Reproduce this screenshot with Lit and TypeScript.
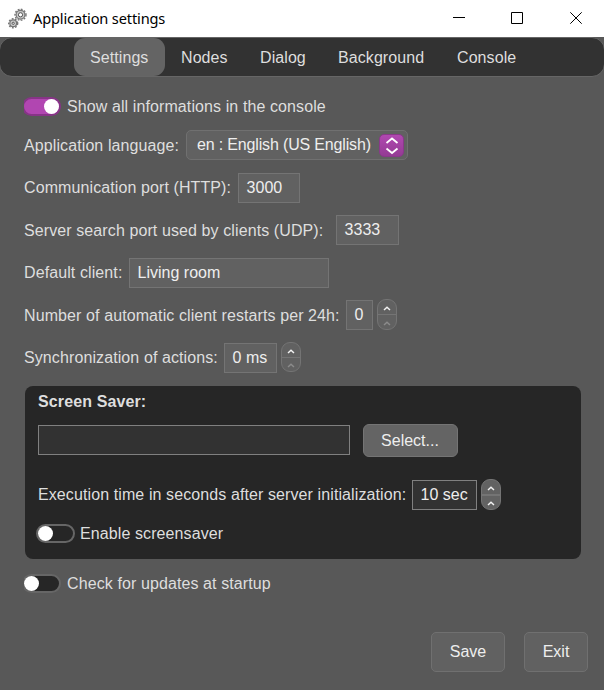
import { LitElement, html, css, svg, nothing } from "lit";
import { customElement, property } from "lit/decorators.js";
import { classMap } from "lit/directives/class-map.js";
import { styleMap } from "lit/directives/style-map.js";

const px = (n: number) => `${n}px`;

@customElement("toggle-switch")
class ToggleSwitch extends LitElement {
  @property({ type: Boolean }) on = false;
  @property({ type: Boolean }) clipped = false;

  static styles = css`
    :host { display: block; flex: none; }
    .frame { overflow: hidden; display: flex; justify-content: flex-end; width: 39px; height: 19px; }
    .clipped { width: 37px; }
    .track {
      box-sizing: border-box; flex: none; width: 39px; height: 19px;
      border: 2px solid #666; border-radius: 10px; background: #262626; display: flex;
    }
    .on { background: #b146b1; border-color: #873487; justify-content: flex-end; }
    .knob { width: 15px; height: 15px; border-radius: 50%; background: #fff; }
  `;

  render() {
    return html`<div class=${classMap({ frame: true, clipped: this.clipped })}>
      <div class=${classMap({ track: true, on: this.on })}><div class="knob"></div></div>
    </div>`;
  }
}

@customElement("step-buttons")
class StepButtons extends LitElement {
  @property() kind = "normal";

  static styles = css`
    :host { display: block; flex: none; width: 20px; height: 31px; margin: -1px 0 0 4px; }
    .box {
      box-sizing: border-box; width: 20px; height: 31px; border: 1px solid #747474;
      border-radius: 9px; background: #616161; display: flex; flex-direction: column;
    }
    .short { height: 30px; }
    .half { flex: 1; display: flex; align-items: center; justify-content: center; }
    .half + .half { border-top: 1px solid #747474; }
    .dark { background: #626262; }
    .dark .half + .half { border-top-width: 2px; }
    svg { display: block; margin-top: 3px; }
    path { fill: none; stroke: #f2f2f2; stroke-width: 1.5; }
    .off path { stroke: #8b8b8b; }
  `;

  render() {
    const arrow = html`<svg width="8" height="5" viewBox="0 0 8 5"><path d="M1 4 4 1.3 7 4" /></svg>`;
    const dark = this.kind === "dark";
    return html`<div class=${classMap({ box: true, dark, short: this.kind === "short" })}>
      <div class="half">${arrow}</div>
      <div class=${classMap({ half: true, off: !dark })}>${arrow}</div>
    </div>`;
  }
}

interface Field {
  label: string;
  value: string;
  labelWidth: number;
  width: number;
  gap: number;
  drop: number;
  step?: string;
}

const FIELDS: Field[] = [
  { label: "Communication port (HTTP):", value: "3000", labelWidth: 214, width: 62, gap: 13, drop: 0 },
  { label: "Server search port used by clients (UDP):", value: "3333", labelWidth: 312, width: 63, gap: 12, drop: 1 },
  { label: "Default client:", value: "Living room", labelWidth: 105, width: 200, gap: 13, drop: 0 },
  { label: "Number of automatic client restarts per 24h:", value: "0", labelWidth: 322, width: 27, gap: 12, drop: 1, step: "normal" },
  { label: "Synchronization of actions:", value: "0 ms", labelWidth: 200, width: 53, gap: 13, drop: 0, step: "short" },
];

const TABS: [string, number][] = [
  ["Settings", 91], ["Nodes", 79], ["Dialog", 78], ["Background", 119], ["Console", 91],
];

const gear = (cx: number, cy: number, r: number) => svg`
  <circle class="teeth" cx=${cx} cy=${cy} r=${r + 1.1} />
  <circle class="wheel" cx=${cx} cy=${cy} r=${r} />
  <circle class="hub" cx=${cx} cy=${cy} r=${r - 2.3} />`;

@customElement("app-root")
class AppRoot extends LitElement {
  static styles = css`
    :host {
      display: flex; flex-direction: column; width: 604px; height: 690px; overflow: hidden;
      background: #585858; color: #dedede; font: 16px/20px "Liberation Sans", Arial, sans-serif;
      white-space: nowrap;
    }
    * { box-sizing: border-box; }
    .titlebar {
      flex: none; height: 37px; background: #fff; color: #000; display: flex; align-items: center;
      padding-left: 8px; font: 14.6px/20px "Noto Sans", sans-serif;
    }
    .title { flex: 1; margin-left: 6px; margin-top: -1px; letter-spacing: -0.15px; }
    .gears .teeth { fill: none; stroke: #777; stroke-width: 1.4; stroke-dasharray: 1.8 1.4; }
    .gears .wheel { fill: #c9c9c9; stroke: #777; stroke-width: 1.2; }
    .gears .hub { fill: #fff; stroke: #555; stroke-width: 1; }
    .controls path { fill: none; stroke: #000; stroke-width: 1; }
    .tabs {
      flex: none; width: 606px; height: 40px; margin-left: -1px; background: #323232;
      border: 1px solid #666; border-radius: 13px; display: flex; padding-left: 74px;
    }
    .tab { flex: none; height: 38px; line-height: 40px; padding-left: 16px; letter-spacing: 0.08px; }
    .selected { background: #646464; border-radius: 11px; }
    .page { flex: 1; padding: 20px 23px 0 24px; display: flex; flex-direction: column; }
    .row { flex: none; display: flex; align-items: flex-start; }
    .label { flex: none; letter-spacing: 0.1px; }
    .field .label, .language .label, .delay .label { padding-top: 5px; }
    .console { height: 20px; }
    .console .label, .updates .label { margin-left: 6px; }
    .language { height: 30px; margin-top: 13px; }
    .language .label { width: 162px; padding-top: 6px; }
    .select {
      width: 222px; height: 30px; border: 1px solid #707070; border-radius: 5px; background: #616161;
      color: #eee; display: flex; align-items: center; justify-content: space-between;
      padding: 0 3px 0 10px; letter-spacing: -0.16px;
    }
    .chevrons {
      display: block; width: 25px; height: 23px; border-radius: 5px; border: 1px solid #8a398a;
      background: linear-gradient(#b148b1, #943b94);
    }
    .chevrons path { fill: none; stroke: #fff; stroke-width: 1.8; }
    .input {
      flex: none; height: 30px; line-height: 28px; border: 1px solid #747474; background: #616161;
      color: #eee; padding-left: 7.6px;
    }
    .saver {
      flex: none; width: 556px; height: 173px; margin: 13px 0 0 1px; background: #262626;
      border-radius: 8px; padding: 6px 13px 0; display: flex; flex-direction: column;
    }
    .heading { flex: none; height: 32px; font-weight: bold; letter-spacing: 0.12px; }
    .saver .input { background: #323232; border-color: #808080; }
    .saver .file { width: 312px; margin-top: 1px; }
    .button {
      border: 1px solid #747474; background: #646464; border-radius: 6px; color: #eee;
      display: flex; align-items: center; justify-content: center; width: 95px; height: 33px;
    }
    .browse { margin-left: 13px; padding-right: 1px; }
    .delay { height: 30px; margin-top: 23px; }
    .delay .label { width: 374px; }
    .delay .input { width: 65px; }
    .enable { height: 20px; margin: 14px 0 0 -2px; }
    .enable .label { margin-left: 5px; }
    .updates { height: 20px; margin-top: 15px; }
    .actions { display: flex; gap: 19px; justify-content: flex-end; margin: 38px -7px 0 0; }
    .actions .button { width: 74px; height: 40px; border-radius: 5px; background: #616161; border-color: #707070; }
    .actions .exit { width: 64px; }
  `;

  render() {
    return html`
      <div class="titlebar">
        <svg class="gears" width="19" height="22" viewBox="0 0 19 22">
          ${gear(12.5, 6.8, 4.4)} ${gear(5.2, 15.3, 3.4)}
        </svg>
        <div class="title">Application settings</div>
        <svg class="controls" width="151" height="37" viewBox="453 0 151 37">
          <path d="M453 17.5h12M511.500 12.500h11v11h-11zM570.300 12.300l11.400 11.400M581.700 12.300l-11.400 11.400" />
        </svg>
      </div>
      <div class="tabs">
        ${TABS.map(([name, width], i) => html`<div
          class=${classMap({ tab: true, selected: i === 0 })}
          style=${styleMap({ width: px(width) })}>${name}</div>`)}
      </div>
      <div class="page">
        <div class="row console">
          <toggle-switch on clipped></toggle-switch>
          <div class="label">Show all informations in the console</div>
        </div>
        <div class="row language">
          <div class="label">Application language:</div>
          <div class="select">
            <span>en : English (US English)</span>
            <svg class="chevrons" viewBox="0 0 23 21"><path d="M6.500 8 12 3.500 17.500 8M6.500 13.500 12 18 17.500 13.500" /></svg>
          </div>
        </div>
        ${FIELDS.map((f) => html`<div class="row field" style=${styleMap({ marginTop: px(f.gap) })}>
          <div class="label" style=${styleMap({ width: px(f.labelWidth), paddingTop: px(5 + f.drop) })}>${f.label}</div>
          <div class="input" style=${styleMap({ width: px(f.width) })}>${f.value}</div>
          ${f.step ? html`<step-buttons kind=${f.step}></step-buttons>` : nothing}
        </div>`)}
        <div class="saver">
          <div class="heading">Screen Saver:</div>
          <div class="row">
            <div class="input file"></div>
            <div class="button browse">Select...</div>
          </div>
          <div class="row delay">
            <div class="label">Execution time in seconds after server initialization:</div>
            <div class="input">10 sec</div>
            <step-buttons kind="dark"></step-buttons>
          </div>
          <div class="row enable">
            <toggle-switch></toggle-switch>
            <div class="label">Enable screensaver</div>
          </div>
        </div>
        <div class="row updates">
          <toggle-switch clipped></toggle-switch>
          <div class="label">Check for updates at startup</div>
        </div>
        <div class="actions">
          <div class="button">Save</div>
          <div class="button exit">Exit</div>
        </div>
      </div>
    `;
  }
}
